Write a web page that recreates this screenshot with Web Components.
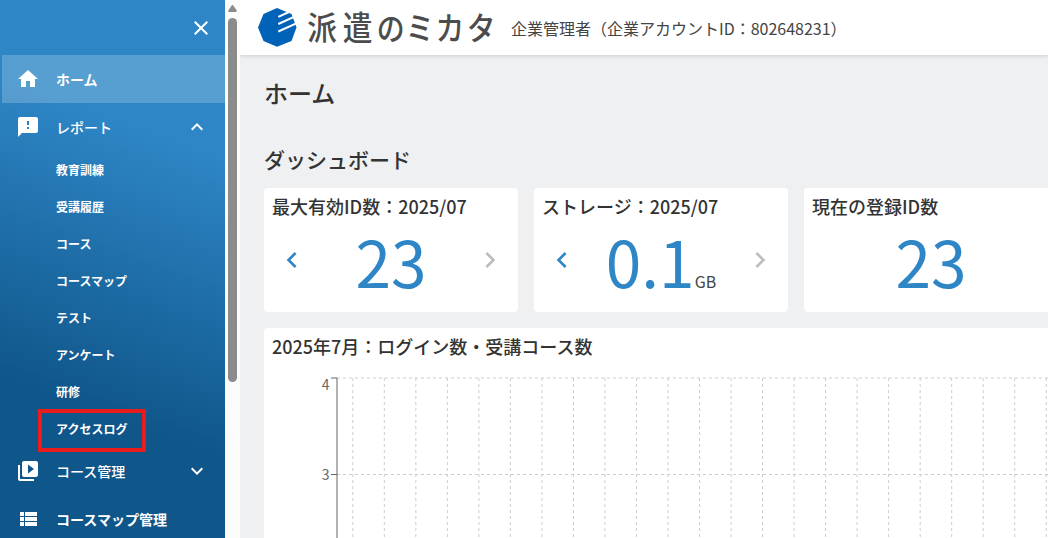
<!DOCTYPE html>
<html lang="ja">
<head>
<meta charset="utf-8">
<title>ホーム</title>
<style>
    html, body {
        margin: 0;
        height: 100%;
        overflow: hidden;
    }

    body {
        font-family: "Noto Sans CJK JP", sans-serif;
        color: #333;
        background: #eff0f2;
    }
</style>
</head>
<body>
<app-shell>
    <side-nav slot="nav">
        <nav-item icon="home" active>ホーム</nav-item>
        <nav-item icon="report" arrow="up" weight="500">レポート</nav-item>
        <nav-sub>教育訓練</nav-sub>
        <nav-sub>受講履歴</nav-sub>
        <nav-sub>コース</nav-sub>
        <nav-sub>コースマップ</nav-sub>
        <nav-sub>テスト</nav-sub>
        <nav-sub>アンケート</nav-sub>
        <nav-sub>研修</nav-sub>
        <nav-sub marked>アクセスログ</nav-sub>
        <nav-item icon="video" arrow="down" weight="500">コース管理</nav-item>
        <nav-item icon="list">コースマップ管理</nav-item>
    </side-nav>
    <scroll-rail slot="nav"></scroll-rail>
    <app-header slot="header">企業管理者（企業アカウントID：802648231）</app-header>
    <home-page>
        <stat-card heading="最大有効ID数：2025/07" arrows>23</stat-card>
        <stat-card heading="ストレージ：2025/07" unit="GB" arrows>0.1</stat-card>
        <stat-card heading="現在の登録ID数">23</stat-card>
        <chart-card slot="chart">2025年7月：ログイン数・受講コース数</chart-card>
    </home-page>
</app-shell>

<script>
const ICONS = {
    home: '<path d="M10 20v-6h4v6h5v-8h3L12 3 2 12h3v8z"/>',
    report: '<path d="M20 2H4c-1.1 0-1.99.9-1.99 2L2 22l4-4h14c1.1 0 2-.9 2-2V4c0-1.1-.9-2-2-2zm-7 12h-2v-2h2v2zm0-4h-2V6h2v4z"/>',
    video: '<path d="M4 6H2v14c0 1.1.9 2 2 2h14v-2H4V6zm16-4H8c-1.1 0-2 .9-2 2v12c0 1.1.9 2 2 2h12c1.1 0 2-.9 2-2V4c0-1.1-.9-2-2-2zm-8 12.500v-9l6 4.500-6 4.500z"/>',
    list: '<path d="M4 14h4v-4H4v4zm0 5h4v-4H4v4zM4 9h4V5H4v4zm5 5h12v-4H9v4zm0 5h12v-4H9v4zM9 5v4h12V5H9z"/>',
    close: '<path d="M19 6.410L17.590 5 12 10.590 6.410 5 5 6.410 10.590 12 5 17.590 6.410 19 12 13.410 17.590 19 19 17.590 13.410 12z"/>',
    up: '<path d="M12 8l-6 6 1.410 1.410L12 10.830l4.590 4.580L18 14z"/>',
    down: '<path d="M16.590 8.590L12 13.170 7.410 8.590 6 10l6 6 6-6z"/>',
    left: '<path d="M15.410 7.410L14 6l-6 6 6 6 1.410-1.410L10.830 12z"/>',
    right: '<path d="M10 6L8.590 7.410 13.170 12l-4.580 4.590L10 18l6-6z"/>'
};

function icon(name, size = 24) {
    return `<svg class="${name}" width="${size}" height="${size}" viewBox="0 0 24 24" fill="currentColor">${ICONS[name]}</svg>`;
}

// Nav on the left, header and page on the right
class AppShell extends HTMLElement {
    constructor() {
        super();
        this.attachShadow({ mode: 'open' }).innerHTML = `
            <style>
                :host { display: flex; height: 100vh; overflow: hidden; }
                .nav { display: flex; flex: none; }
                .main { flex: 1; min-width: 0; display: flex; flex-direction: column; }
            </style>
            <div class="nav"><slot name="nav"></slot></div>
            <div class="main"><slot name="header"></slot><slot></slot></div>
        `;
    }
}

class SideNav extends HTMLElement {
    constructor() {
        super();
        this.attachShadow({ mode: 'open' }).innerHTML = `
            <style>
                :host {
                    display: block;
                    width: 225px;
                    height: 100vh;
                    overflow: hidden;
                    color: #fff;
                    background: linear-gradient(200deg, #2e86c6 150px, #0f568a 430px);
                }
                .top { display: flex; justify-content: flex-end; align-items: center; height: 55px; padding-right: 12px; box-sizing: border-box; }
                svg { display: block; }
            </style>
            <div class="top">${icon('close')}</div>
            <slot></slot>
        `;
    }
}

class NavItem extends HTMLElement {
    connectedCallback() {
        const arrow = this.getAttribute('arrow');
        this.attachShadow({ mode: 'open' }).innerHTML = `
            <style>
                :host {
                    display: flex;
                    align-items: center;
                    height: 48px;
                    margin-left: 2px;
                    padding: 0 16px 0 14px;
                    box-sizing: border-box;
                    font-size: 14px;
                    line-height: 20px;
                    font-weight: ${this.getAttribute('weight') || 700};
                }
                :host([active]) { background: rgba(255, 255, 255, .2); }
                .label { flex: 1; margin-left: 16px; }
                svg { flex: none; }
            </style>
            ${icon(this.getAttribute('icon'))}
            <span class="label"><slot></slot></span>
            ${arrow ? icon(arrow) : ''}
        `;
    }
}

class NavSub extends HTMLElement {
    constructor() {
        super();
        this.attachShadow({ mode: 'open' }).innerHTML = `
            <style>
                :host {
                    display: flex;
                    align-items: center;
                    position: relative;
                    height: 37px;
                    padding-left: 56px;
                    font-size: 12px;
                    line-height: 18px;
                    font-weight: 700;
                }
                /* marker frame lies over the row */
                :host([marked])::after {
                    content: "";
                    position: absolute;
                    left: 38px;
                    top: -1px;
                    width: 100px;
                    height: 35px;
                    border: 4px solid #e81c1c;
                }
            </style>
            <slot></slot>
        `;
    }
}

class ScrollRail extends HTMLElement {
    constructor() {
        super();
        this.attachShadow({ mode: 'open' }).innerHTML = `
            <style>
                :host { display: flex; flex-direction: column; align-items: center; width: 15px; background: #fcfcfc; }
                svg { display: block; margin: 4px 0 5px; }
                .thumb { width: 9px; height: 364px; border-radius: 5px; background: #8b8b8b; }
            </style>
            <svg width="9" height="9" viewBox="0 0 9 9"><path d="M3.700 1.600Q4.500.600 5.300 1.600L8.700 6.600Q9 8 7.800 8H1.200Q0 8 .300 6.600Z" fill="#8b8b8b"/></svg>
            <div class="thumb"></div>
        `;
    }
}

class AppHeader extends HTMLElement {
    constructor() {
        super();
        this.attachShadow({ mode: 'open' }).innerHTML = `
            <style>
                :host {
                    display: flex;
                    flex: none;
                    align-items: center;
                    height: 55px;
                    background: #fff;
                    box-shadow: 0 1px 4px rgba(0, 0, 0, .15);
                    clip-path: inset(0 0 -8px 0);
                    font-size: 16px;
                    white-space: nowrap;
                    z-index: 1;
                }
                svg { display: block; flex: none; }
                .user { margin-left: 11px; padding-top: 1px; font-weight: 400; line-height: 24px; color: #444; }
            </style>
            <svg width="260" height="55" viewBox="240 0 260 55">
                <path d="M277 8L291.500 14 296.500 27.500 291.500 41 277 46.800 263.500 41 258 27.500 263.500 14Z" fill="#0063b8"/>
                <g stroke="#fff" stroke-width="2">
                    <path d="M278.300 16.800L290 11.500M278.300 24L294 16.800M278.300 31.500L298 22.600"/>
                </g>
                <g transform="scale(.9 1)" font-weight="500" fill="#4c4c4c">
                    <text y="40" font-size="33" x="341.300 380.800 418.500 450.700 484 518.500">派遣<tspan font-size="31">の</tspan><tspan font-size="32">ミカタ</tspan></text>
                </g>
            </svg>
            <span class="user"><slot></slot></span>
        `;
    }
}

class HomePage extends HTMLElement {
    constructor() {
        super();
        this.attachShadow({ mode: 'open' }).innerHTML = `
            <style>
                :host { display: block; padding: 20px 0 0 24px; }
                h1, h2 { margin: 0; font-weight: 500; color: #333; }
                h1 { font-size: 24px; line-height: 36px; }
                h2 { font-size: 21px; line-height: 32px; margin: 32px 0 13px; }
                .cards { display: grid; grid-template-columns: repeat(3, 254px); gap: 16px; margin-bottom: 16px; }
            </style>
            <h1>ホーム</h1>
            <h2>ダッシュボード</h2>
            <div class="cards"><slot></slot></div>
            <slot name="chart"></slot>
        `;
    }
}

class StatCard extends HTMLElement {
    connectedCallback() {
        const arrows = this.hasAttribute('arrows');
        const unit = this.getAttribute('unit');
        this.attachShadow({ mode: 'open' }).innerHTML = `
            <style>
                :host { display: block; height: 124px; box-sizing: border-box; padding: 5px 8px; border-radius: 4px; background: #fff; }
                .heading { font-size: 18px; font-weight: 500; line-height: 26px; white-space: nowrap; }
                .body { display: flex; align-items: center; height: 82px; padding: 0 4px; }
                .value { flex: 1; padding-top: 20px; text-align: center; line-height: 64px; white-space: nowrap; }
                .num { font-size: 64px; color: #2e86c6; }
                .unit { font-size: 16px; color: #444; }
                .left { color: #2e86c6; }
                .right { color: #bdbdbd; }
            </style>
            <div class="heading">${this.getAttribute('heading')}</div>
            <div class="body">
                ${arrows ? icon('left', 32) : ''}
                <div class="value"><span class="num"><slot></slot></span>${unit ? `<span class="unit">${unit}</span>` : ''}</div>
                ${arrows ? icon('right', 32) : ''}
            </div>
        `;
    }
}

class ChartCard extends HTMLElement {
    connectedCallback() {
        // 31 days in the month, one vertical line per day
        let lines = '';
        for (let i = 0; i < 31; i++) {
            const x = (88.800 + i * 31.520).toFixed(2);
            lines += `<line x1="${x}" y1="18" x2="${x}" y2="404"/>`;
        }
        this.attachShadow({ mode: 'open' }).innerHTML = `
            <style>
                :host { display: block; width: 1080px; height: 460px; border-radius: 4px; background: #fff; }
                .heading { padding: 5px 8px 1px; font-size: 18px; font-weight: 500; line-height: 26px; }
                svg { display: block; }
                text { font-size: 14px; font-weight: 400; fill: #666; text-anchor: end; }
            </style>
            <div class="heading"><slot></slot></div>
            <svg width="1080" height="420">
                <g stroke="#ccc" stroke-dasharray="3 3">
                    <line x1="73" y1="18" x2="1060" y2="18"/>
                    <line x1="73" y1="114.500" x2="1060" y2="114.500"/>
                    ${lines}
                </g>
                <g stroke="#666">
                    <line x1="73" y1="18" x2="73" y2="404"/>
                    <line x1="67" y1="18" x2="73" y2="18"/>
                    <line x1="67" y1="114.500" x2="73" y2="114.500"/>
                </g>
                <text x="65.500" y="30">4</text>
                <text x="65.500" y="119.500">3</text>
            </svg>
        `;
    }
}

customElements.define('app-shell', AppShell);
customElements.define('side-nav', SideNav);
customElements.define('nav-item', NavItem);
customElements.define('nav-sub', NavSub);
customElements.define('scroll-rail', ScrollRail);
customElements.define('app-header', AppHeader);
customElements.define('home-page', HomePage);
customElements.define('stat-card', StatCard);
customElements.define('chart-card', ChartCard);
</script>
</body>
</html>
